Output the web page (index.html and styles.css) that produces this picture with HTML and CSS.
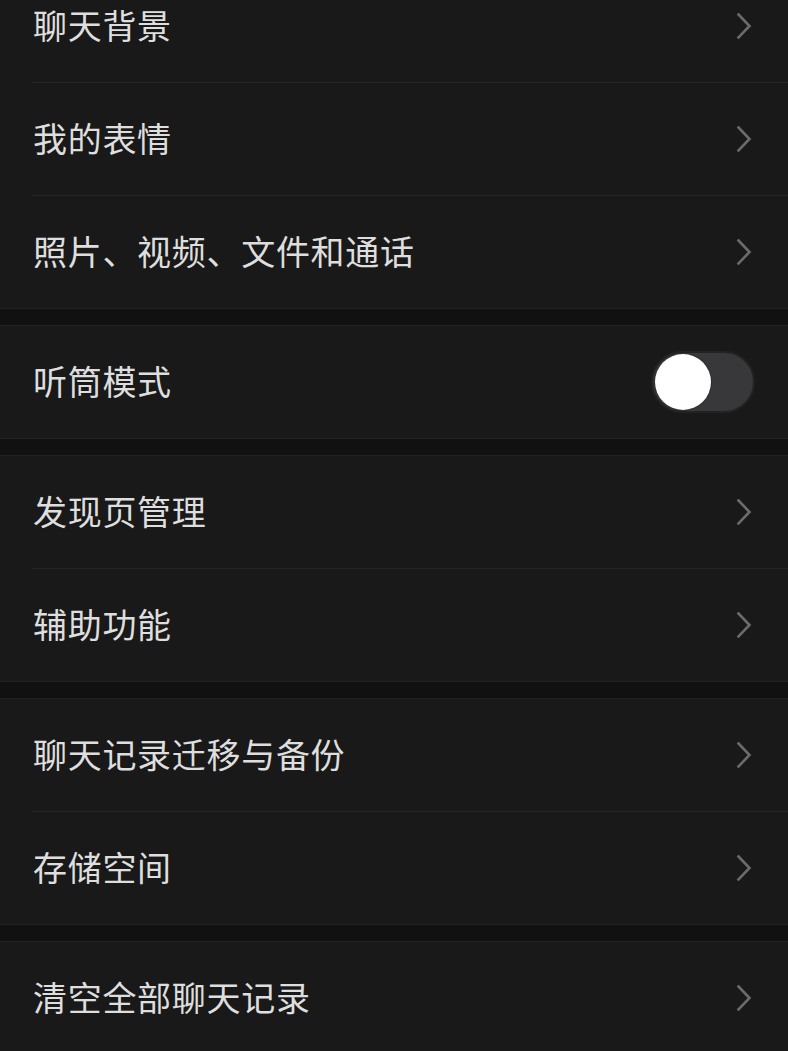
FILE: index.html
```html
<!DOCTYPE html>
<html lang="zh-CN">
<head>
<meta charset="utf-8">
<title>设置</title>
<link rel="stylesheet" href="styles.css">
</head>
<body>
<div class="page">
  <div class="group">
    <div class="row"><span class="label">聊天背景</span><svg class="chev" viewBox="0 0 16 28"><polyline points="2.5,2.5 13.5,14 2.5,25.5"/></svg></div>
    <div class="row"><span class="label">我的表情</span><svg class="chev" viewBox="0 0 16 28"><polyline points="2.5,2.5 13.5,14 2.5,25.5"/></svg></div>
    <div class="row"><span class="label">照片、视频、文件和通话</span><svg class="chev" viewBox="0 0 16 28"><polyline points="2.5,2.5 13.5,14 2.5,25.5"/></svg></div>
  </div>
  <div class="group">
    <div class="row"><span class="label">听筒模式</span><div class="toggle"><div class="knob"></div></div></div>
  </div>
  <div class="group">
    <div class="row"><span class="label">发现页管理</span><svg class="chev" viewBox="0 0 16 28"><polyline points="2.5,2.5 13.5,14 2.5,25.5"/></svg></div>
    <div class="row"><span class="label">辅助功能</span><svg class="chev" viewBox="0 0 16 28"><polyline points="2.5,2.5 13.5,14 2.5,25.5"/></svg></div>
  </div>
  <div class="group">
    <div class="row"><span class="label">聊天记录迁移与备份</span><svg class="chev" viewBox="0 0 16 28"><polyline points="2.5,2.5 13.5,14 2.5,25.5"/></svg></div>
    <div class="row"><span class="label">存储空间</span><svg class="chev" viewBox="0 0 16 28"><polyline points="2.5,2.5 13.5,14 2.5,25.5"/></svg></div>
  </div>
  <div class="group">
    <div class="row"><span class="label">清空全部聊天记录</span><svg class="chev" viewBox="0 0 16 28"><polyline points="2.5,2.5 13.5,14 2.5,25.5"/></svg></div>
  </div>
</div>
</body>
</html>
```
FILE: styles.css
```css
html, body {
  margin: 0;
  padding: 0;
  background: #111111;
  overflow: hidden;
}
body {
  width: 788px;
  height: 1051px;
  font-family: "Noto Sans CJK SC", "Noto Sans", sans-serif;
}
.page {
  margin-top: -30px;
  display: flex;
  flex-direction: column;
  gap: 16px;
}
.group {
  background: #191919;
  border-top: 1px solid #222222;
  border-bottom: 1px solid #222222;
  padding-left: 32px;
}
.group:first-child {
  border-top: none;
}
.row {
  height: 112px;
  display: flex;
  align-items: center;
  justify-content: space-between;
  padding-right: 36px;
  border-bottom: 1px solid #242424;
}
.row:last-child {
  border-bottom: none;
}
.label {
  color: #dedede;
  font-size: 34px;
  letter-spacing: 0.7px;
  padding-left: 1px;
  margin-bottom: 4px;
}
.chev {
  width: 16px;
  height: 28px;
  fill: none;
  stroke: #6b6b6b;
  stroke-width: 2.6;
  stroke-linecap: square;
}
.toggle {
  width: 98px;
  height: 58px;
  border-radius: 31px;
  background: #38383a;
  border: 2px solid #232323;
  margin-right: -3px;
  display: flex;
  align-items: center;
  padding-left: 2px;
  box-sizing: content-box;
}
.knob {
  width: 56px;
  height: 56px;
  border-radius: 50%;
  background: #ffffff;
  box-shadow: 0 0 2px rgba(0,0,0,0.5);
}
```
